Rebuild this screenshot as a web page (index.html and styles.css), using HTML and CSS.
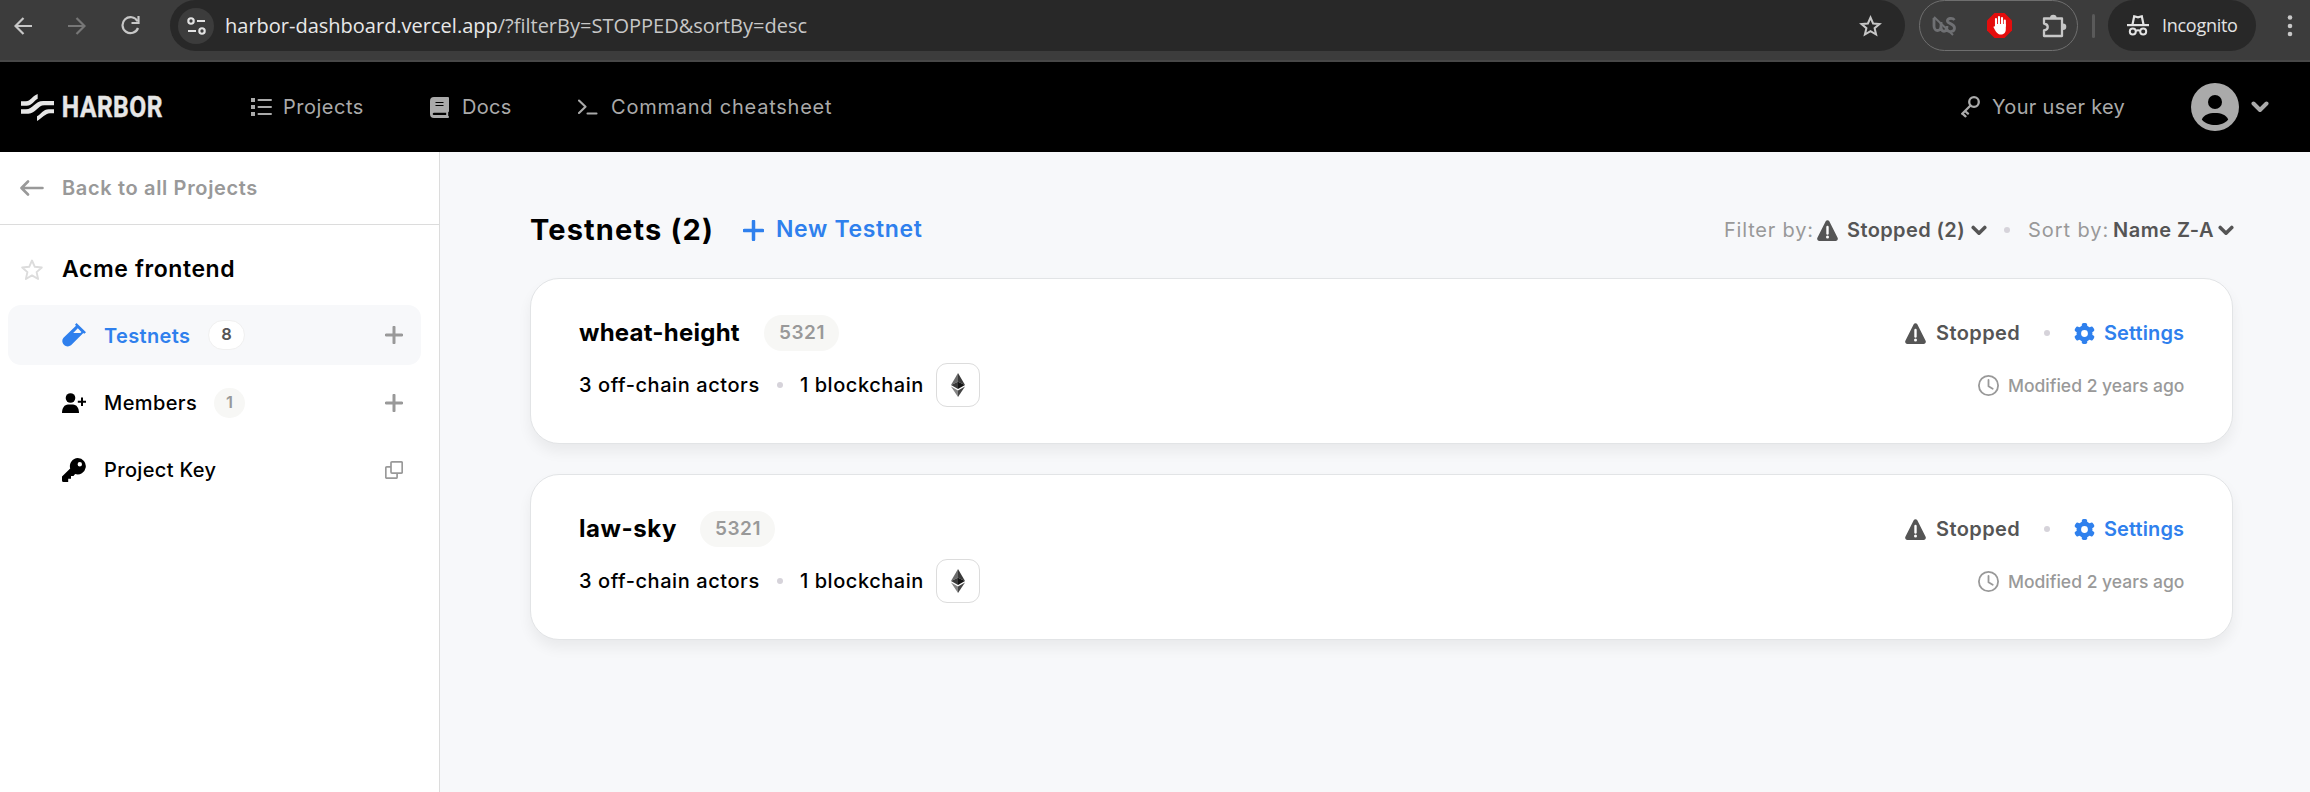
FILE: index.html
```html
<!DOCTYPE html>
<html lang="en">
<head>
<meta charset="utf-8">
<title>Harbor – Testnets</title>
<link rel="stylesheet" href="styles.css">
</head>
<body>
<svg class="defs" width="0" height="0" aria-hidden="true">
  <defs>
    <symbol id="chevron" viewBox="0 0 18 12"><path d="M2.5 2.5 9 9l6.500-6.500" fill="none" stroke="currentColor" stroke-width="4" stroke-linecap="round" stroke-linejoin="round"/></symbol>
    <symbol id="plus" viewBox="0 0 18 18"><path d="M9 1.200v15.600M1.200 9h15.600" fill="none" stroke="currentColor" stroke-width="3" stroke-linecap="round"/></symbol>
    <symbol id="warning" viewBox="0 0 21 21"><path d="M8.700 1.200c.7-1.400 2.900-1.400 3.600 0l8.300 16.500c.7 1.600-.2 3.300-2 3.300H2.400c-1.800 0-2.700-1.700-2-3.300z" fill="#555"/><path d="M10.500 7v6.500" stroke="#fff" stroke-width="2.400" stroke-linecap="round"/><circle cx="10.500" cy="17" r="1.500" fill="#fff"/></symbol>
    <symbol id="gear" viewBox="-10.500 -10.500 21 21"><g fill="currentColor"><path fill-rule="evenodd" d="M0-8A8 8 0 0 1 0 8 8 8 0 0 1 0-8M0-3.400A3.400 3.400 0 0 0 0 3.400 3.400 3.400 0 0 0 0-3.400"/><rect id="tooth" x="-2.700" y="-10.500" width="5.400" height="6" rx="1.700"/><use href="#tooth" transform="rotate(60)"/><use href="#tooth" transform="rotate(120)"/><use href="#tooth" transform="rotate(180)"/><use href="#tooth" transform="rotate(240)"/><use href="#tooth" transform="rotate(300)"/></g></symbol>
    <symbol id="clock" viewBox="0 0 21 21"><circle cx="10.500" cy="10.500" r="9.600" fill="none" stroke="currentColor" stroke-width="1.800"/><path d="M10.500 5v6.200l4.200 2.600" fill="none" stroke="currentColor" stroke-width="1.800" stroke-linecap="round" stroke-linejoin="round"/></symbol>
    <symbol id="ethereum" viewBox="0 0 14 24"><path d="M7 0 0 12l7-3.200z" fill="#6b6b6b"/><path d="M7 0v8.800l7 3.200z" fill="#3a3a3a"/><path d="M0 12l7-3.200V16z" fill="#3b3b3b"/><path d="M14 12 7 8.800V16z" fill="#151515"/><path d="M0 13.500 7 24v-6.400z" fill="#858585"/><path d="M14 13.500 7 24v-6.400z" fill="#454545"/></symbol>
  </defs>
</svg>

<div class="browser">
  <svg class="b-back" width="18" height="18" viewBox="0 0 18 18"><path d="M18 9H2M9.500 1 1.500 9l8 8" fill="none" stroke="#c7c7c7" stroke-width="2.200"/></svg>
  <svg class="b-fwd" width="18" height="18" viewBox="0 0 18 18"><path d="M0 9h16M8.500 1l8 8-8 8" fill="none" stroke="#777" stroke-width="2.200"/></svg>
  <svg class="b-reload" width="19" height="19" viewBox="0 0 19 19"><path d="M16.500 5.200A8 8 0 1 0 17 12" fill="none" stroke="#c7c7c7" stroke-width="2.200"/><path d="M17.500 0v7h-7" fill="none" stroke="#c7c7c7" stroke-width="2.200"/></svg>
  <div class="omnibox">
    <span class="site-info"><svg width="19" height="18" viewBox="0 0 19 18" fill="none" stroke="#e3e3e3" stroke-width="2.100"><circle cx="4" cy="4" r="2.700"/><path d="M10 4h8M1 14h8"/><circle cx="15" cy="14" r="2.700"/></svg></span>
    <span class="url">harbor-dashboard.vercel.app<span class="url-query">/?filterBy=STOPPED&amp;sortBy=desc</span></span>
    <svg class="bookmark" width="23" height="22" viewBox="0 0 23 22"><path d="m11.500 2.500 2.600 6 6.400.5-4.900 4.200 1.500 6.300-5.600-3.400-5.600 3.400 1.500-6.300L2.500 9l6.400-.5z" fill="none" stroke="#c7c7c7" stroke-width="2"/></svg>
  </div>
  <div class="extensions">
    <svg width="24" height="20" viewBox="0 0 24 20" fill="none" stroke="#6f7073" stroke-width="2.800"><path d="M2 2v8c0 6 7 6 7 0V6M9 10c0 7 6 7 6 0M22.500 4c-2-2.500-8-2-7 1.500.8 2.500 7 2 7 6.500 0 4-5 4.500-8 2"/><path d="m2 1 19 18" stroke-width="2"/></svg>
    <svg width="25" height="25" viewBox="0 0 25 25"><path d="M7.500 0h10L25 7.500v10L17.500 25h-10L0 17.500v-10z" fill="#e40d0d"/><path d="M9 14V6M12 12V4M15 12V5M17.800 13V7.500" stroke="#fff" stroke-width="2.100" stroke-linecap="round"/><path d="M8 11h10.800v5c0 4-2 5.500-5 5.500-3.500 0-5-3-7.300-7.300 0-1.200 1.500-1.200 2.300.3z" fill="#fff"/></svg>
    <svg width="25" height="24" viewBox="0 0 25 24"><path d="M2 4.500h18V22H2v-5.500c5-1 5-6 0-7z" fill="none" stroke="#c7c7c7" stroke-width="2.300" stroke-linejoin="round"/><path d="M8 4a3.300 3.300 0 0 1 6.600 0zM21 9.500a3.300 3.300 0 0 1 0 6.600z" fill="#c7c7c7"/></svg>
  </div>
  <span class="divider"></span>
  <div class="incognito">
    <svg width="22" height="21" viewBox="0 0 22 21"><path d="M0 9h22v2.200H0z" fill="#e3e3e3"/><path d="M5.500 9.500 7.200 1.300l3.800 1 3.800-1 1.700 8.200" fill="none" stroke="#e3e3e3" stroke-width="2.200"/><g fill="none" stroke="#e3e3e3" stroke-width="2"><circle cx="5.800" cy="16.500" r="3"/><circle cx="16.200" cy="16.500" r="3"/><path d="M8.800 16q2.200-1.300 4.400 0"/></g></svg>
    <span class="incognito-label">Incognito</span>
  </div>
  <svg class="b-menu" width="6" height="22" viewBox="0 0 6 22" fill="#c7c7c7"><circle cx="3" cy="2.500" r="2.300"/><circle cx="3" cy="11" r="2.300"/><circle cx="3" cy="19" r="2.300"/></svg>
</div>

<header class="header">
  <a class="logo">
    <svg width="33" height="27" viewBox="63 42 99 81" fill="#e6e6e6"><path d="M63 64h15c13 0 18-16 35-22v14c-10 5-18 21-33 21H63z"/><path d="M63 88h15c20 0 26-25 52-25h32v13h-29c-20 0-26 25-48 25H63z"/><path d="M162 88v12h-12c-15 1-25 16-39 23v-14c11-5 19-21 35-21z"/></svg>
    <span class="wordmark">HARBOR</span>
  </a>
  <nav class="nav">
    <a class="nav-item nav-projects"><span class="nav-icon"><svg width="21" height="18" viewBox="0 0 21 18" fill="#aaa"><path d="M0 0h4v4H0zM0 7h4v4H0zM0 14h4v4H0z"/><path d="M7.500 2H20M7.500 9H20M7.500 16H20" stroke="#aaa" stroke-width="2" stroke-linecap="round"/></svg></span>Projects</a>
    <a class="nav-item nav-docs"><span class="nav-icon"><svg width="19" height="21" viewBox="0 0 19 21"><path d="M4 0h14q1 0 1 1v13q0 1-.8 1.300v3.500q.8.2.8 1.200t-1 1H4q-4 0-4-4V4q0-4 4-4z" fill="#aaa"/><path d="M5.500 5.500h8M5.500 8.500h8" stroke="#000" stroke-width="1.200"/><path d="M3.800 15.800h12.400V18H3.800q-1.100-.2-1.100-1.100t1.100-1.100z" fill="#000"/></svg></span>Docs</a>
    <a class="nav-item nav-command"><span class="nav-icon"><svg width="20" height="16" viewBox="0 0 20 16" fill="none" stroke="#aaa" stroke-width="2.100" stroke-linecap="round" stroke-linejoin="round"><path d="m1 1.500 6.500 6.300L1 14M9.500 14.500h9"/></svg></span>Command cheatsheet</a>
  </nav>
  <a class="nav-item user-key"><span class="nav-icon"><svg width="19" height="22" viewBox="0 0 19 22" fill="none" stroke="#aaa" stroke-width="2.300" stroke-linecap="round" stroke-linejoin="round"><circle cx="13" cy="6" r="4.800"/><path d="M9.500 9.500 1.200 17.800M4 15l3 2.600M1.500 17.700l3 2.600"/></svg></span>Your user key</a>
  <svg class="avatar" width="48" height="48" viewBox="0 0 48 48"><circle cx="24" cy="24" r="24" fill="#aaa"/><circle cx="24" cy="19" r="7"/><path d="M10.800 36.500C13 31.500 18 30 24 30s11 1.500 13.200 6.500C34 40.500 29 42 24 42s-10-1.500-13.200-5.500z"/></svg>
  <svg class="menu-arrow" width="18" height="12"><use href="#chevron"/></svg>
</header>

<div class="page">
  <aside class="sidebar">
    <a class="back"><span class="lead"><svg width="24" height="16" viewBox="0 0 24 16" fill="none" stroke="#999" stroke-width="2.600" stroke-linecap="round" stroke-linejoin="round"><path d="M22.500 8H2M8 1.500 1.500 8 8 14.500"/></svg></span>Back to all Projects</a>
    <div class="project"><span class="lead"><svg width="22" height="22" viewBox="0 0 22 22"><path d="m11 1.500 2.800 6.300 7 .7-5.200 4.600 1.500 6.900-6.100-3.600L4.900 20l1.500-6.900L1.200 8.500l7-.7z" fill="none" stroke="#dcdcdc" stroke-width="1.900" stroke-linejoin="round"/></svg></span>Acme frontend</div>
    <a class="item item-active">
      <span class="item-icon"><svg width="24" height="24" viewBox="0 0 24 24"><path d="M14.500 0 24 9.300l-1.700 1.500-1-.8L9 22.300C4 26-2.400 19.500 1.500 14.800L14 2.800l-1-1.100zM15.800 5.200l-4.600 4.800h7.200l1-1z" fill="#2f80ed" fill-rule="evenodd"/></svg></span>
      <span class="item-label testnets-label">Testnets</span><span class="count count-white">8</span>
      <svg class="action" width="18" height="18"><use href="#plus"/></svg>
    </a>
    <a class="item">
      <span class="item-icon"><svg width="24" height="20" viewBox="0 0 24 20"><circle cx="8.500" cy="5" r="4.800"/><path d="M0 20c0-5 2.500-8.500 6-8.500h5c3.500 0 6 3.500 6 8.500z"/><path d="M20 4.500v8.500M15.800 8.800h8.200" stroke="#000" stroke-width="2"/></svg></span>
      <span class="item-label members-label">Members</span><span class="count">1</span>
      <svg class="action" width="18" height="18"><use href="#plus"/></svg>
    </a>
    <a class="item">
      <span class="item-icon"><svg width="24" height="24" viewBox="0 0 24 24"><path d="M15.800 0a8.200 8.200 0 1 1-2.700 16L11.500 18H9v2.800H6.200V24H1.500Q0 24 0 22.500v-4l8.200-8A8.200 8.200 0 0 1 15.800 0zm2 4a2.200 2.200 0 1 0 0 4.400 2.200 2.200 0 0 0 0-4.400z" fill-rule="evenodd"/></svg></span>
      <span class="item-label key-label">Project Key</span>
      <svg class="action" width="18" height="18" viewBox="0 0 18 18" fill="none" stroke="#999" stroke-width="1.700"><rect x="6" y=".9" width="11.200" height="11.200" rx="1"/><path d="M6 5.900H1.800q-1 0-1 1v9.300q0 1 1 1h9.300q1 0 1-1V12"/></svg>
    </a>
  </aside>

  <main class="main">
    <div class="toolbar">
      <h1 class="title">Testnets (2)</h1>
      <a class="new"><svg width="21" height="21"><use href="#plus"/></svg><span>New Testnet</span></a>
      <div class="filters">
        <span class="muted filter-label">Filter by:</span>
        <svg class="filter-warning" width="21" height="21"><use href="#warning"/></svg>
        <span class="choice filter-value">Stopped (2)</span>
        <svg class="arrow" width="16" height="11"><use href="#chevron"/></svg>
        <span class="dot filter-dot"></span>
        <span class="muted sort-label">Sort by:</span>
        <span class="choice sort-value">Name Z-A</span>
        <svg class="arrow" width="16" height="11"><use href="#chevron"/></svg>
      </div>
    </div>

    <article class="card">
      <div class="row row-top">
        <h2 class="name">wheat-height</h2><span class="chain-id">5321</span>
        <div class="status"><svg width="21" height="21"><use href="#warning"/></svg><span class="status-text">Stopped</span><span class="dot status-dot"></span><svg class="blue" width="21" height="21"><use href="#gear"/></svg><span class="settings">Settings</span></div>
      </div>
      <div class="row row-bottom">
        <span class="actors">3 off-chain actors</span><span class="dot"></span><span class="chains">1 blockchain</span>
        <span class="token"><svg width="14" height="24"><use href="#ethereum"/></svg></span>
        <div class="modified"><svg width="21" height="21"><use href="#clock"/></svg><span class="modified-text">Modified 2 years ago</span></div>
      </div>
    </article>

    <article class="card">
      <div class="row row-top">
        <h2 class="name name-short">law-sky</h2><span class="chain-id">5321</span>
        <div class="status"><svg width="21" height="21"><use href="#warning"/></svg><span class="status-text">Stopped</span><span class="dot status-dot"></span><svg class="blue" width="21" height="21"><use href="#gear"/></svg><span class="settings">Settings</span></div>
      </div>
      <div class="row row-bottom">
        <span class="actors">3 off-chain actors</span><span class="dot"></span><span class="chains">1 blockchain</span>
        <span class="token"><svg width="14" height="24"><use href="#ethereum"/></svg></span>
        <div class="modified"><svg width="21" height="21"><use href="#clock"/></svg><span class="modified-text">Modified 2 years ago</span></div>
      </div>
    </article>
  </main>
</div>
</body>
</html>
```
FILE: styles.css
```css
* { box-sizing: border-box; }
body {
  margin: 0;
  height: 792px;
  display: flex;
  flex-direction: column;
  overflow: hidden;
  background: #f7f8fa;
  font-family: Inter, "Liberation Sans", sans-serif;
  font-size: 20px;
  line-height: 1.2;
  white-space: nowrap;
}
h1, h2 { margin: 0; }
svg { display: block; flex: none; }
.defs { position: absolute; }

/* Browser toolbar */
.browser {
  flex: none;
  height: 62px;
  padding: 0 17px 11px 14px;
  display: flex;
  align-items: center;
  background: #3c3c3c;
  box-shadow: inset 0 -2px #474747;
  font-family: "Open Sans", "Noto Sans", sans-serif;
}
.b-fwd { margin-left: 36px; }
.b-reload { margin-left: 35px; }
.omnibox {
  display: flex;
  align-items: center;
  width: 1735px;
  height: 51px;
  margin-left: 30px;
  padding: 0 23px 0 8px;
  border-radius: 26px;
  background: #282828;
}
.site-info {
  display: flex;
  align-items: center;
  justify-content: center;
  width: 36px;
  height: 36px;
  border-radius: 50%;
  background: #3c3c3c;
}
.url { margin-left: 11px; font-size: 20px; color: #e8e8e8; }
.url-query { color: #c7c7c7; }
.bookmark { margin-left: auto; }
.extensions {
  display: flex;
  align-items: center;
  justify-content: space-between;
  width: 159px;
  height: 51px;
  margin-left: 14px;
  padding: 0 10px 0 12px;
  border: 1.500px solid #6f6f6f;
  border-radius: 26px;
}
.divider { width: 3px; height: 24px; margin-left: 14px; background: #5a5a5a; border-radius: 2px; }
.incognito {
  display: flex;
  align-items: center;
  width: 148px;
  height: 51px;
  margin-left: 13px;
  padding-left: 19px;
  border-radius: 26px;
  background: #282828;
}
.incognito-label { margin-left: 13px; font-size: 18px; letter-spacing: -.28px; color: #e3e3e3; }
.b-menu { margin-left: auto; }

/* Site header */
.header {
  flex: none;
  display: flex;
  align-items: center;
  height: 90px;
  padding: 0 41px 0 21px;
  background: #000;
  color: #aaa;
}
.logo { display: flex; align-items: center; width: 230px; gap: 7px; }
.wordmark {
  margin-top: 1px;
  padding-left: 1px;
  font: 700 29px/1 Roboto, sans-serif;
  letter-spacing: .5px;
  color: #e6e6e6;
  -webkit-text-stroke: .4px #e6e6e6;
  transform: scaleX(.85);
  transform-origin: left;
}
.nav { display: flex; }
.nav-item { display: flex; align-items: center; }
.nav-icon { flex: none; width: 33px; }
.nav-projects { width: 179px; letter-spacing: .5px; }
.nav-projects .nav-icon { width: 32px; }
.nav-docs { width: 148px; letter-spacing: .3px; }
.nav-docs .nav-icon { width: 32px; }
.nav-command { letter-spacing: .77px; }
.user-key { width: 230px; margin-left: auto; letter-spacing: .3px; }
.user-key .nav-icon { width: 31px; }
.menu-arrow { margin-left: 12px; }

.page { flex: 1; display: flex; min-height: 0; }

/* Sidebar */
.sidebar { flex: none; width: 440px; background: #fff; border-right: 1px solid #dcdcdc; }
.lead { flex: none; width: 42px; }
.back {
  display: flex;
  align-items: center;
  height: 73px;
  padding-left: 20px;
  border-bottom: 1px solid #dcdcdc;
  color: #999;
  font-weight: 600;
  letter-spacing: .65px;
}
.project {
  display: flex;
  align-items: center;
  height: 80px;
  padding: 10px 0 0 21px;
  font-size: 23px;
  font-weight: 600;
  letter-spacing: .6px;
}
.project .lead { width: 41px; }
.item {
  display: flex;
  align-items: center;
  width: 413px;
  height: 60px;
  margin: 0 0 7.500px 8px;
  padding: 0 18px 0 54px;
  border-radius: 13px;
  font-weight: 500;
}
.item-active { background: #f7f8fa; color: #2f80ed; font-size: 20px; font-weight: 600; }
.item-icon { width: 43px; }
.testnets-label { width: 104px; margin-left: -1px; padding-top: 1px; letter-spacing: .35px; }
.members-label { width: 110px; letter-spacing: .4px; margin-left: -1px; }
.key-label { letter-spacing: .35px; margin-left: -1px; }
.count {
  display: flex;
  align-items: center;
  justify-content: center;
  width: 31px;
  height: 30px;
  border-radius: 15px;
  background: #f7f7f5;
  color: #999;
  font-size: 16.500px;
  font-weight: 600;
}
.count-white { width: 37px; background: #fff; border: 1px solid #f0f0f0; color: #555; }
.action { margin-left: auto; color: #999; }

/* Testnets list */
.main { flex: 1; padding: 60px 77px 0 90px; }
.toolbar { display: flex; align-items: center; height: 36px; margin-bottom: 30px; }
.title { width: 213px; padding-top: 1px; font-size: 29px; font-weight: 700; letter-spacing: 1.150px; }
.new { display: flex; align-items: center; gap: 12px; color: #2f80ed; font-size: 23px; font-weight: 600; letter-spacing: .65px; }
.filters { display: flex; align-items: center; margin: 0 -1px 0 auto; }
.muted { color: #999; }
.choice { color: #555; font-weight: 600; }
.filter-label { width: 93px; letter-spacing: .81px; }
.filter-value { width: 124px; margin-left: 9px; letter-spacing: .39px; }
.arrow { color: #555; }
.filter-dot { margin: 0 18px 0 17px; }
.sort-label { width: 85px; letter-spacing: .93px; }
.sort-value { width: 105px; letter-spacing: .49px; }
.dot { flex: none; width: 6px; height: 6px; border-radius: 50%; background: #d6d3da; }
.card {
  height: 166px;
  margin-bottom: 30px;
  padding: 36px 48px 0 48px;
  border: 1px solid #e2e4e6;
  border-radius: 29px;
  background: #fff;
  box-shadow: 0 8px 14px rgba(0, 0, 0, .06);
}
.row { display: flex; align-items: center; }
.row-top { height: 36px; margin-bottom: 12px; }
.row-bottom { height: 44px; font-weight: 500; }
.name { width: 185px; font-size: 24px; font-weight: 700; letter-spacing: .23px; }
.name-short { width: 121px; letter-spacing: .55px; }
.chain-id {
  display: flex;
  align-items: center;
  width: 75px;
  height: 36px;
  padding-left: 15px;
  border-radius: 18px;
  background: #f7f7f5;
  color: #999;
  font-size: 19px;
  font-weight: 600;
  letter-spacing: .54px;
}
.status { display: flex; align-items: center; margin-left: auto; font-size: 20px; font-weight: 600; }
.status-text { width: 108px; margin-left: 9px; padding-left: 1px; color: #555; letter-spacing: .4px; }
.status-dot { margin: 0 24px 0 1px; }
.blue { color: #2f80ed; }
.settings { width: 80px; margin-left: 9px; color: #2f80ed; letter-spacing: .1px; }
.actors { width: 198px; letter-spacing: .57px; }
.chains { width: 136px; margin-left: 17px; letter-spacing: .54px; }
.token {
  display: flex;
  align-items: center;
  justify-content: center;
  width: 44px;
  height: 44px;
  border: 1px solid #dcdcdc;
  border-radius: 11px;
}
.modified { display: flex; align-items: center; margin-left: auto; gap: 9px; color: #999; font-size: 17.500px; }
.modified-text { width: 176px; }
```
